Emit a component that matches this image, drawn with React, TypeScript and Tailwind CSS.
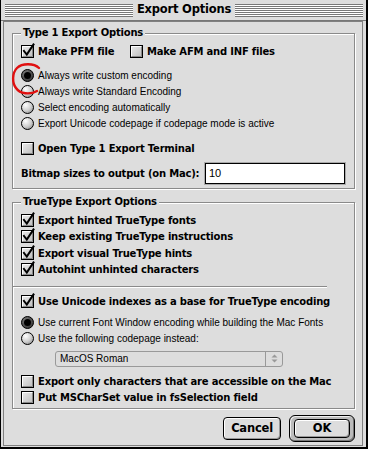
import React from 'react'

const bold = "font-['DejaVu_Sans',sans-serif] font-bold text-[10px] tracking-[-0.2px] text-black whitespace-nowrap"
const plain = "font-['Liberation_Sans',Arial,sans-serif] text-[10px] text-black whitespace-nowrap"

function CheckBox({ checked }: { checked?: boolean }) {
  return (
    <svg width="15" height="15" viewBox="0 0 15 15" className="shrink-0 overflow-visible">
      <defs>
        <linearGradient id="cbg" x1="0" y1="0" x2="1" y2="1">
          <stop offset="0" stopColor="#eeeeee" />
          <stop offset="1" stopColor="#bbbbbb" />
        </linearGradient>
      </defs>
      <rect x="0.5" y="1.5" width="12" height="12" fill="url(#cbg)" stroke="#000" />
      <path d="M1.5 12.5 V2.5 H11.5" stroke="#fff" fill="none" />
      <path d="M1.5 12.5 H11.5 V2.5" stroke="#888" fill="none" />
      {checked && (
        <path d="M3 7 L5.8 10.5 L12.5 0.5" stroke="#000" strokeWidth="2" fill="none" strokeLinecap="square" />
      )}
    </svg>
  )
}

function Radio({ on }: { on?: boolean }) {
  return (
    <svg width="13" height="13" viewBox="0 0 13 13" className="shrink-0">
      <defs>
        <radialGradient id="rg" cx="0.35" cy="0.3" r="0.8">
          <stop offset="0" stopColor="#ffffff" />
          <stop offset="0.6" stopColor="#cccccc" />
          <stop offset="1" stopColor="#8a8a8a" />
        </radialGradient>
        <radialGradient id="ron" cx="0.35" cy="0.3" r="0.8">
          <stop offset="0" stopColor="#777" />
          <stop offset="1" stopColor="#333" />
        </radialGradient>
      </defs>
      <circle cx="6.5" cy="6.5" r="6" fill={on ? 'url(#ron)' : 'url(#rg)'} stroke="#000" />
      {on && <circle cx="6.5" cy="6.5" r="3.5" fill="#000" />}
    </svg>
  )
}

function CheckRow({ label, checked }: { label: string; checked?: boolean }) {
  return (
    <div className="flex h-4 items-center gap-[2px]">
      <CheckBox checked={checked} />
      <span className={bold}>{label}</span>
    </div>
  )
}

function RadioRow({ label, on }: { label: string; on?: boolean }) {
  return (
    <div className="flex h-4 items-center gap-[4px]">
      <Radio on={on} />
      <span className={plain}>{label}</span>
    </div>
  )
}

function Group({ title, children, className }: { title: string; children: React.ReactNode; className?: string }) {
  return (
    <div className={'relative w-[343px] border border-[#8a8a8a] shadow-[inset_1px_1px_0_#fff,1px_1px_0_#fff] ' + (className ?? '')}>
      <span className={'absolute -top-[7px] left-[8px] bg-[#dddddd] px-[2px] leading-[12px] ' + bold}>{title}</span>
      {children}
    </div>
  )
}

function Stripes() {
  return (
    <div className="h-[13px] flex-1 bg-[repeating-linear-gradient(to_bottom,#777777_0px,#777777_1px,#ffffff_1px,#ffffff_2px)]" />
  )
}

export default function App() {
  return (
    <div className="flex h-[449px] w-[368px] flex-col border-b-2 border-l border-r-2 border-black bg-[#dddddd]">
      {/* title bar */}
      <div className="flex h-[21px] shrink-0 items-center border-b border-[#777] pl-[4px] pr-[3px]">
        <Stripes />
        <span className="whitespace-nowrap px-[4px] font-['DejaVu_Sans',sans-serif] text-[11.5px] font-bold tracking-[-0.2px] text-black">
          Export Options
        </span>
        <Stripes />
      </div>

      {/* body */}
      <div className="flex flex-1 pb-[1px] pl-[2px] pr-[3px]">
        <div className="relative flex w-[360px] flex-col border border-[#808080] pl-[8px] pt-[11px]">
          <Group title="Type 1 Export Options" className="h-[156px]">
            <div className="flex flex-col pl-[8px] pt-[9px]">
              <div className="flex h-4 items-center">
                <div className="w-[109px]">
                  <CheckRow label="Make PFM file" checked />
                </div>
                <CheckRow label="Make AFM and INF files" />
              </div>
              <div className="mt-[8px] flex flex-col">
                <RadioRow label="Always write custom encoding" on />
                <RadioRow label="Always write Standard Encoding" />
                <RadioRow label="Select encoding automatically" />
                <RadioRow label="Export Unicode codepage if codepage mode is active" />
              </div>
              <div className="mt-[9px]">
                <CheckRow label="Open Type 1 Export Terminal" />
              </div>
              <div className="mt-[7px] flex h-[21px] items-center">
                <span className={'w-[184px] ' + bold}>Bitmap sizes to output (on Mac):</span>
                <div className="flex h-[21px] w-[140px] items-center border border-black bg-white pl-[3px] shadow-[0_0_0_1px_#aaaaaa]">
                  <span className={plain + ' text-[11px]'}>10</span>
                </div>
              </div>
            </div>
          </Group>

          <Group title="TrueType Export Options" className="mt-[13px] h-[207px]">
            <div className="flex flex-col pt-[9px]">
              <div className="flex flex-col gap-[0.5px] pl-[8px]">
                <CheckRow label="Export hinted TrueType fonts" checked />
                <CheckRow label="Keep existing TrueType instructions" checked />
                <CheckRow label="Export visual TrueType hints" checked />
                <CheckRow label="Autohint unhinted characters" checked />
              </div>
              <div className="mt-[8px] h-[1px] w-[314px] bg-[#8a8a8a] shadow-[0_1px_0_#fff]" />
              <div className="flex flex-col pl-[8px]">
                <div className="mt-[7px]">
                  <CheckRow label="Use Unicode indexes as a base for TrueType encoding" checked />
                </div>
                <div className="mt-[5px] flex flex-col">
                  <RadioRow label="Use current Font Window encoding while building the Mac Fonts" on />
                  <RadioRow label="Use the following codepage instead:" />
                </div>
                <div className="ml-[34px] mt-[4px] flex h-[16px] w-[228px] items-center rounded-[3px] border border-[#999999] bg-[#dddddd]">
                  <span className={plain + ' flex-1 pl-[4px] text-[#8a8a8a]'}>MacOS Roman</span>
                  <div className="flex h-full w-[17px] items-center justify-center border-l border-[#999999]">
                    <svg width="7" height="9" viewBox="0 0 7 9">
                      <path d="M3.5 0.5 L6.5 3.5 H0.5 Z" fill="#999" />
                      <path d="M3.5 8.5 L6.5 5.5 H0.5 Z" fill="#999" />
                    </svg>
                  </div>
                </div>
                <div className="mt-[7px] flex flex-col">
                  <CheckRow label="Export only characters that are accessible on the Mac" />
                  <CheckRow label="Put MSCharSet value in fsSelection field" />
                </div>
              </div>
            </div>
          </Group>

          <div className="mt-[6px] flex items-center justify-end gap-[8px] pr-[7px]">
            <div className="flex h-[23px] w-[58px] items-center justify-center rounded-[4px] border border-black bg-[#dddddd] shadow-[inset_1px_1px_0_#fff,inset_-1px_-1px_0_#999]">
              <span className={bold + ' text-[11.5px]'}>Cancel</span>
            </div>
            <div className="flex h-[27px] w-[66px] items-center justify-center rounded-[6px] border border-black bg-[#bbbbbb] shadow-[inset_1px_1px_0_#eee,inset_-1px_-1px_0_#777]">
              <div className="flex h-[19px] w-[56px] items-center justify-center rounded-[4px] border border-black bg-[#dddddd] shadow-[inset_1px_1px_0_#fff,inset_-1px_-1px_0_#999]">
                <span className={bold + ' text-[11.5px]'}>OK</span>
              </div>
            </div>
          </div>

          {/* red annotation circle */}
          <svg className="absolute left-[7px] top-[41px]" width="34" height="33" viewBox="0 0 34 33">
            <path
              d="M28 5 C23 0 11 0 6 5 C1 10 1 20 5 25 C9 31 19 32 26 28"
              stroke="#e01010"
              strokeWidth="2.4"
              fill="none"
              strokeLinecap="round"
            />
          </svg>
        </div>
      </div>
    </div>
  )
}
